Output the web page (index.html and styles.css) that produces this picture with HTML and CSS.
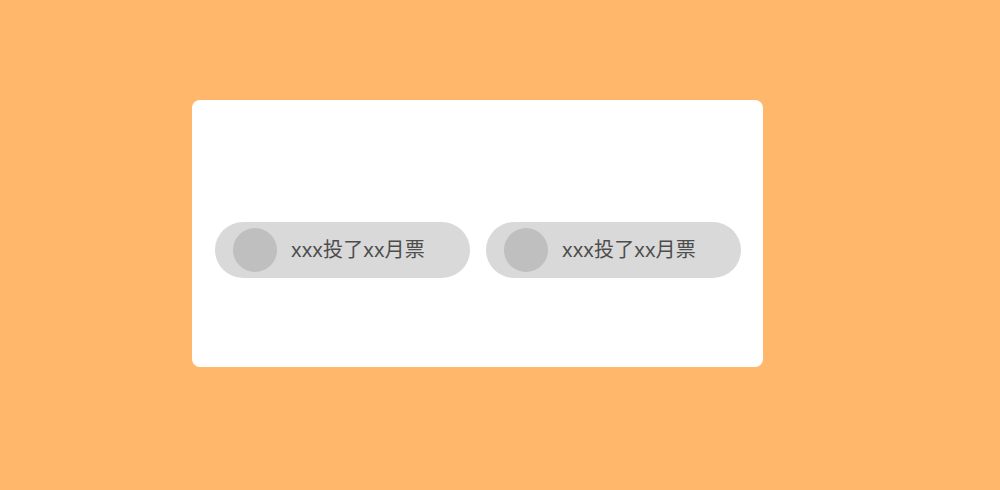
FILE: index.html
```html
<!DOCTYPE html>
<html lang="zh">
<head>
<meta charset="utf-8">
<link rel="stylesheet" href="styles.css">
</head>
<body>
<div class="card">
  <div class="row">
    <div class="pill"><span class="avatar"></span><span class="label">xxx投了xx月票</span></div>
    <div class="pill"><span class="avatar"></span><span class="label">xxx投了xx月票</span></div>
  </div>
</div>
</body>
</html>
```
FILE: styles.css
```css
html, body {
  margin: 0;
  padding: 0;
}
body {
  width: 1000px;
  height: 490px;
  background: #ffb76b;
  font-family: "Noto Sans", "Noto Sans CJK SC", sans-serif;
  padding-top: 100px;
  padding-left: 192px;
  box-sizing: border-box;
}
.card {
  width: 571px;
  height: 267px;
  background: #ffffff;
  border-radius: 8px;
  box-sizing: border-box;
  padding-top: 122px;
  padding-left: 1px;
}
.row {
  display: flex;
  justify-content: center;
  gap: 16px;
}
.pill {
  width: 255px;
  height: 56px;
  border-radius: 28px;
  background: #d9d9d9;
  display: flex;
  align-items: center;
  padding-left: 18px;
  box-sizing: border-box;
}
.avatar {
  width: 44px;
  height: 44px;
  border-radius: 50%;
  background: #bfbfbf;
  flex: none;
}
.label {
  margin-left: 14px;
  font-size: 20px;
  color: #4d4d4d;
  line-height: 1;
  letter-spacing: 0.1px;
}
```
